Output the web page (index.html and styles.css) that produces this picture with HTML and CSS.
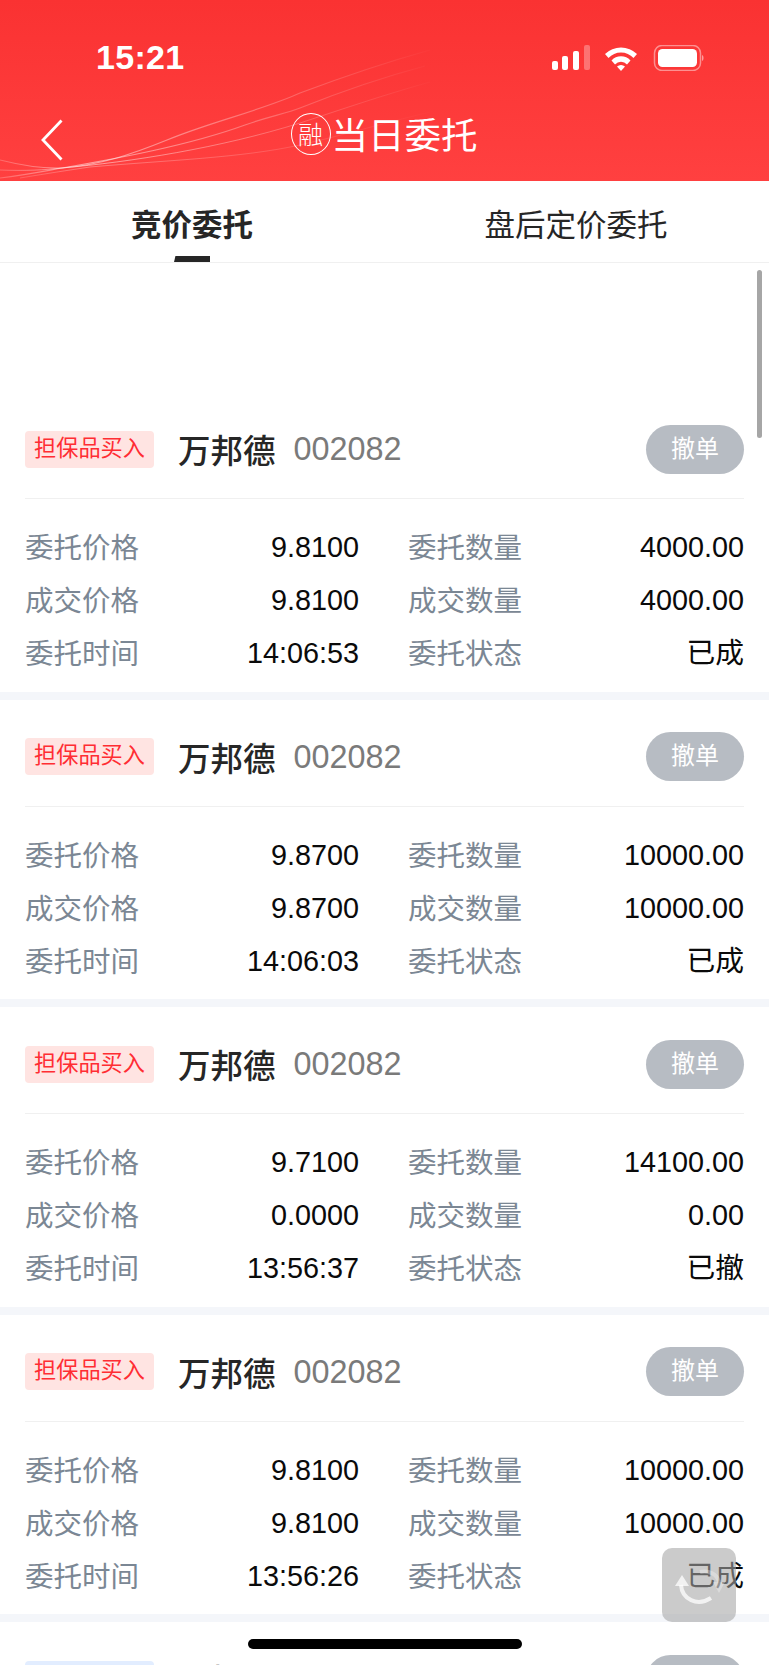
FILE: index.html
```html
<!DOCTYPE html>
<html lang="zh">
<head>
<meta charset="utf-8">
<title>当日委托</title>
<link rel="stylesheet" href="styles.css">
</head>
<body>
<div class="phone">
  <header class="head">
    <svg class="waves" viewBox="0 0 460 181" width="460" height="181" fill="none">
      <defs>
        <linearGradient id="fade" gradientUnits="userSpaceOnUse" x1="0" y1="0" x2="440" y2="0">
          <stop offset="0" stop-color="#fff" stop-opacity=".22"/>
          <stop offset=".2" stop-color="#fff" stop-opacity=".5"/>
          <stop offset=".55" stop-color="#fff" stop-opacity=".3"/>
          <stop offset="1" stop-color="#fff" stop-opacity="0"/>
        </linearGradient>
      </defs>
      <g stroke="url(#fade)">
        <path d="M0 160C20 165 40 169 62 168C100 165 130 155 167 140C210 122 260 111 300 93C340 78 380 64 430 50" stroke-width="1.200"/>
        <path d="M0 178C25 175 45 171 62 168C120 158 190 145 245 125C270 116 285 114 300 108C340 92 380 78 425 66" stroke-width="1.200"/>
        <path d="M0 170C25 171 45 170 62 168C130 162 220 148 300 123C340 110 380 96 430 82"/>
        <path d="M20 178C50 173 70 170 90 167C170 160 240 158 300 145C340 136 380 124 430 112" stroke-opacity=".6"/>
      </g>
    </svg>
    <div class="status">
      <span class="time">15:21</span>
      <svg class="status-icons" width="153" height="26" viewBox="0 0 153 26" fill="#fff">
        <rect x="0" y="16" width="6" height="9" rx="2"/>
        <rect x="10" y="11" width="6" height="14" rx="2"/>
        <rect x="21" y="6" width="6" height="19" rx="2"/>
        <rect x="32" y="0" width="6" height="25" rx="2" fill-opacity=".3"/>
        <path d="M53 9a23 23 0 0 1 32 0l-3.500 4a17 17 0 0 0-25 0z"/>
        <path d="M59.500 15.500a13 13 0 0 1 19 0l-3.500 4a8 8 0 0 0-12 0z"/>
        <path d="M65 21.500a6 6 0 0 1 8 0l-4 4.500z"/>
        <rect x="102.500" y="0.500" width="46" height="25" rx="7.500" fill="none" stroke="#fff" stroke-opacity=".45" stroke-width="1.500"/>
        <rect x="106" y="4" width="39" height="18" rx="4.500"/>
        <path d="M150 10c2 .6 2 5.400 0 6z" fill-opacity=".5"/>
      </svg>
    </div>
    <div class="nav">
      <svg class="back" width="22" height="42" viewBox="0 0 22 42" fill="none" stroke="#fff" stroke-width="2.800"><path d="M20.500 1.500L2 21l18.500 19.500"/></svg>
      <div class="title-wrap">
        <span class="seal"><span class="seal-char">融</span></span>
        <h1 class="title">当日委托</h1>
      </div>
    </div>
  </header>

  <nav class="tabs">
    <div class="tab tab-on">竞价委托<i class="tab-bar"></i></div>
    <div class="tab">盘后定价委托</div>
  </nav>

  <main class="list">
    <article class="card">
      <div class="card-top"><span class="tag">担保品买入</span><span class="name">万邦德</span><span class="code">002082</span><span class="cancel">撤单</span></div>
      <div class="grid">
        <span class="k">委托价格</span><span class="v">9.8100</span><span class="k">委托数量</span><span class="v">4000.00</span>
        <span class="k">成交价格</span><span class="v">9.8100</span><span class="k">成交数量</span><span class="v">4000.00</span>
        <span class="k">委托时间</span><span class="v">14:06:53</span><span class="k">委托状态</span><span class="v">已成</span>
      </div>
    </article>
    <article class="card">
      <div class="card-top"><span class="tag">担保品买入</span><span class="name">万邦德</span><span class="code">002082</span><span class="cancel">撤单</span></div>
      <div class="grid">
        <span class="k">委托价格</span><span class="v">9.8700</span><span class="k">委托数量</span><span class="v">10000.00</span>
        <span class="k">成交价格</span><span class="v">9.8700</span><span class="k">成交数量</span><span class="v">10000.00</span>
        <span class="k">委托时间</span><span class="v">14:06:03</span><span class="k">委托状态</span><span class="v">已成</span>
      </div>
    </article>
    <article class="card">
      <div class="card-top"><span class="tag">担保品买入</span><span class="name">万邦德</span><span class="code">002082</span><span class="cancel">撤单</span></div>
      <div class="grid">
        <span class="k">委托价格</span><span class="v">9.7100</span><span class="k">委托数量</span><span class="v">14100.00</span>
        <span class="k">成交价格</span><span class="v">0.0000</span><span class="k">成交数量</span><span class="v">0.00</span>
        <span class="k">委托时间</span><span class="v">13:56:37</span><span class="k">委托状态</span><span class="v">已撤</span>
      </div>
    </article>
    <article class="card">
      <div class="card-top"><span class="tag">担保品买入</span><span class="name">万邦德</span><span class="code">002082</span><span class="cancel">撤单</span></div>
      <div class="grid">
        <span class="k">委托价格</span><span class="v">9.8100</span><span class="k">委托数量</span><span class="v">10000.00</span>
        <span class="k">成交价格</span><span class="v">9.8100</span><span class="k">成交数量</span><span class="v">10000.00</span>
        <span class="k">委托时间</span><span class="v">13:56:26</span><span class="k">委托状态</span><span class="v">已成</span>
      </div>
    </article>
    <article class="card">
      <div class="card-top"><span class="tag tag-sell">担保品卖出</span><span class="name">一拓银</span><span class="cancel">撤单</span></div>
    </article>
  </main>

  <div class="scrollbar"></div>
  <div class="float-btn">
    <svg width="52" height="52" viewBox="0 0 52 52" fill="none" stroke="#fff" stroke-opacity=".75" stroke-width="4">
      <path d="M8 26C9 40 24 48 38 39"/>
      <path d="M9 16l7 11H2z" fill="#fff" fill-opacity=".75" stroke="none"/>
      <path d="M46 23C44 15 36 11 27 13" stroke-opacity=".3"/>
      <path d="M46 34l-6-11h12z" fill="#fff" fill-opacity=".3" stroke="none"/>
    </svg>
  </div>
  <div class="home"></div>
</div>
</body>
</html>
```
FILE: styles.css
```css
* { box-sizing: border-box; }
html, body { margin: 0; padding: 0; background: #fff; }
body { font-family: "Liberation Sans", "Noto Sans CJK SC", sans-serif; }
.phone { position: relative; width: 769px; height: 1665px; overflow: hidden; background: #fff; }

.head { position: relative; height: 181px; background: linear-gradient(180deg, #fa3232 0%, #ff4040 100%); color: #fff; overflow: hidden; }
.waves { position: absolute; left: 0; top: 0; }
.status { position: relative; display: flex; justify-content: space-between; align-items: center; height: 114px; padding: 0 64px 0 96px; }
.time { font-size: 34px; font-weight: 700; line-height: 40px; letter-spacing: 0.3px; }
.status-icons { display: block; margin-top: 2px; }
.nav { position: relative; display: flex; align-items: center; justify-content: center; height: 67px; margin-top: -14px; }
.back { position: absolute; left: 41px; top: 19px; }
.title-wrap { display: flex; align-items: center; margin-left: -1px; }
.seal { display: flex; align-items: center; justify-content: center; width: 40px; height: 42px; border: 1.500px solid #fff; border-radius: 50%; margin-right: 1px; }
.seal-char { font-family: "Noto Sans CJK SC", sans-serif; font-size: 25px; font-weight: 300; line-height: 1; }
.title { margin: 0; font-family: "Noto Sans CJK SC", sans-serif; font-size: 36.500px; font-weight: 400; line-height: 44px; }

.tabs { display: flex; height: 82px; border-bottom: 1.500px solid #f0f0f0; font-family: "Noto Sans CJK SC", sans-serif; }
.tab { position: relative; flex: 0 0 auto; width: 384px; text-align: center; font-size: 30.500px; line-height: 84px; color: #262626; }
.tab-on { font-weight: 700; }
.tab-bar { position: absolute; left: 174px; top: 75px; width: 36px; height: 6px; background: #262626; clip-path: polygon(4% 0, 100% 0, 100% 100%, 0 100%); }

.list { padding-top: 129px; background: #fff; }
.card { height: 307.500px; padding: 0 25px; border-bottom: 8px solid #f4f6fa; }
.card-top { display: flex; align-items: center; height: 107px; padding-top: 33px; padding-bottom: 25px; border-bottom: 1px solid #f0f0f0; }
.tag { display: block; width: 129px; height: 37px; background: #ffe4e2; border-radius: 4px; color: #ff2d33; font-family: "Noto Sans CJK SC", sans-serif; font-size: 22.200px; line-height: 30px; text-align: center; }
.tag-sell { background: #e2edff; color: #2f7cf6; }
.name { margin-left: 24px; font-family: "Noto Sans CJK SC", sans-serif; font-size: 32.500px; font-weight: 500; line-height: 40px; color: #262626; }
.code { margin-left: 18px; font-size: 32.400px; line-height: 44px; color: #7a7a7a; }
.cancel { margin-left: auto; width: 98px; height: 49px; border-radius: 25px; background: #b7bcc3; color: #fff; font-family: "Noto Sans CJK SC", sans-serif; font-size: 24px; line-height: 44px; text-align: center; }

.grid { display: grid; grid-template-columns: 150px 184px 150px 1fr; grid-auto-rows: 53px; padding-top: 23px; }
.k, .v { white-space: nowrap; }
.k { font-family: "Noto Sans CJK SC", sans-serif; font-size: 28.500px; line-height: 47px; color: #7b8794; }
.k:nth-child(4n+3) { padding-left: 49px; }
.v { font-size: 28.800px; line-height: 51px; color: #0a0a0a; text-align: right; }

.scrollbar { position: absolute; left: 757px; top: 270px; width: 5px; height: 168px; border-radius: 3px; background: #a6a6a6; }
.float-btn { position: absolute; left: 662px; top: 1548px; width: 74px; height: 74px; border-radius: 10px; background: rgba(165,165,165,.58); display: flex; align-items: center; justify-content: center; }
.home { position: absolute; left: 248px; top: 1639px; width: 274px; height: 10px; border-radius: 5px; background: #000; }
```
